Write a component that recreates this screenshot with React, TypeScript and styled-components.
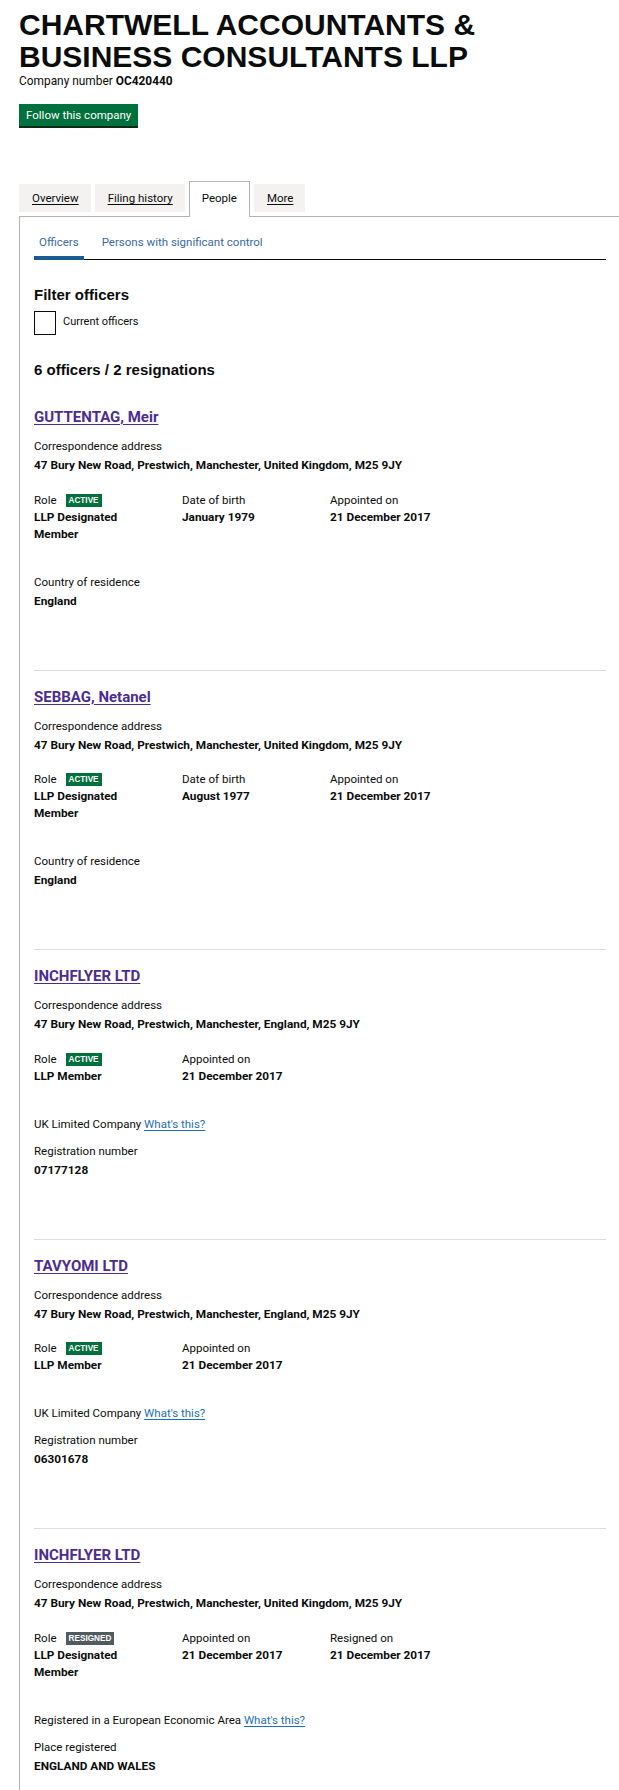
import React from "react";
import styled, { createGlobalStyle } from "styled-components";

const GlobalStyle = createGlobalStyle`
  html, body { margin: 0; padding: 0; background: #ffffff; overflow-x: hidden; }
  body {
    font-family: Roboto, "Liberation Sans", Arial, sans-serif;
    color: #0b0c0c;
    font-size: 11.5px;
    line-height: 17px;
  }
  * { box-sizing: border-box; }
`;

const Page = styled.div`
  padding: 9px 0 0 19px;
`;

const Title = styled.h1`
  margin: 0;
  font-family: "Liberation Sans", Arial, sans-serif;
  font-weight: 700;
  font-size: 30px;
  line-height: 32px;
  color: #0b0c0c;
`;

const CompanyNumber = styled.p`
  margin: 0;
  font-size: 11.9px;
  line-height: 17px;
  strong { font-weight: 700; }
`;

const FollowButton = styled.button`
  margin-top: 14px;
  height: 22px;
  padding: 0 7px;
  border: none;
  border-radius: 0;
  background: #00703c;
  color: #ffffff;
  font-family: Roboto, "Liberation Sans", Arial, sans-serif;
  font-size: 11.5px;
  line-height: 22px;
  box-shadow: 0 2px 0 #002d18;
  cursor: pointer;
  display: block;
`;

const TabNav = styled.ul`
  list-style: none;
  margin: 55px 0 0;
  padding: 0;
  display: flex;
  align-items: flex-end;
  gap: 4px;
`;

const Tab = styled.li<{ $active?: boolean }>`
  line-height: 28px;
  font-size: 11.5px;
  ${(p) =>
    p.$active
      ? `
    background: #ffffff;
    border: 1px solid #b1b4b6;
    border-bottom: none;
    padding: 2px 12px 5px;
    margin-bottom: -1px;
    position: relative;
    z-index: 1;
  `
      : `
    background: #f3f2f1;
    height: 28px;
    padding: 0 12px 0 13px;
    margin-bottom: 4px;
  `}
  a {
    color: #0b0c0c;
    text-decoration: ${(p) => (p.$active ? "none" : "underline")};
    text-underline-offset: 2px;
  }
`;

const Panel = styled.div`
  width: 602px;
  border: 1px solid #b1b4b6;
  border-bottom: none;
  padding: 17px 14px 80px;
`;

const SubTabs = styled.ul`
  list-style: none;
  margin: 0;
  padding: 0;
  display: flex;
  gap: 13px;
  border-bottom: 1px solid #0b0c0c;
`;

const SubTab = styled.li<{ $selected?: boolean }>`
  padding: 0 5px 9px;
  margin-bottom: -1px;
  line-height: 17px;
  color: #3a6aa8;
  box-shadow: ${(p) => (p.$selected ? "inset 0 -4px 0 #1d5b94" : "none")};
`;

const SectionHeading = styled.h2<{ $gap: number }>`
  margin: ${(p) => p.$gap}px 0 0;
  font-family: "Liberation Sans", Arial, sans-serif;
  font-weight: 700;
  font-size: 15px;
  line-height: 20px;
`;

const CheckRow = styled.label`
  margin-top: 6px;
  display: flex;
  align-items: center;
  gap: 7px;
`;

const CheckBox = styled.span`
  width: 22px;
  height: 24px;
  border: 1.5px solid #0b0c0c;
  background: #ffffff;
`;

const CheckText = styled.span`
  font-size: 11px;
  margin-top: -3px;
`;

const OfficerList = styled.div`
  margin-top: 27px;
`;

const Officer = styled.section``;

const OfficerName = styled.a`
  display: block;
  width: fit-content;
  font-weight: 700;
  font-size: 15px;
  line-height: 20px;
  color: #4c2c92;
  text-decoration: underline;
  text-underline-offset: 2px;
`;

const Label = styled.div<{ $gap?: number }>`
  margin-top: ${(p) => p.$gap ?? 0}px;
  line-height: 17px;
`;

const Value = styled.div`
  margin-top: 2px;
  font-weight: 700;
  font-size: 11.8px;
  line-height: 17px;
`;

const Grid = styled.div<{ $cols: number }>`
  margin-top: 17.5px;
  display: grid;
  grid-template-columns: repeat(${(p) => p.$cols}, 118px);
  column-gap: 30px;
`;

const Cell = styled.div``;

const CellValue = styled.div`
  font-weight: 700;
  font-size: 11.8px;
  line-height: 17px;
`;

const Badge = styled.span<{ $resigned?: boolean }>`
  display: inline-block;
  vertical-align: 1px;
  margin-left: 9px;
  padding: 0 3px;
  height: 13px;
  line-height: 13px;
  font-family: "Liberation Sans", Arial, sans-serif;
  font-weight: 700;
  font-size: 8.2px;
  color: #ffffff;
  background: ${(p) => (p.$resigned ? "#505a5f" : "#00703c")};
`;

const Extra = styled.div`
  margin-top: 31px;
`;

const InfoLink = styled.a`
  color: #1d70b8;
  text-decoration: underline;
  text-underline-offset: 2px;
`;

const Rule = styled.hr`
  margin: 60px 0 16px;
  border: none;
  border-top: 1px solid #dcdddf;
  height: 0;
`;

type Field = { label: string; value: string };
type OfficerData = {
  name: string;
  address: string;
  status: "ACTIVE" | "RESIGNED";
  role: string;
  columns: Field[];
  extra: { note?: string; label: string; value: string };
};

const UK = "47 Bury New Road, Prestwich, Manchester, United Kingdom, M25 9JY";
const ENG = "47 Bury New Road, Prestwich, Manchester, England, M25 9JY";

const officers: OfficerData[] = [
  {
    name: "GUTTENTAG, Meir",
    address: UK,
    status: "ACTIVE",
    role: "LLP Designated Member",
    columns: [
      { label: "Date of birth", value: "January 1979" },
      { label: "Appointed on", value: "21 December 2017" },
    ],
    extra: { label: "Country of residence", value: "England" },
  },
  {
    name: "SEBBAG, Netanel",
    address: UK,
    status: "ACTIVE",
    role: "LLP Designated Member",
    columns: [
      { label: "Date of birth", value: "August 1977" },
      { label: "Appointed on", value: "21 December 2017" },
    ],
    extra: { label: "Country of residence", value: "England" },
  },
  {
    name: "INCHFLYER LTD",
    address: ENG,
    status: "ACTIVE",
    role: "LLP Member",
    columns: [{ label: "Appointed on", value: "21 December 2017" }],
    extra: { note: "UK Limited Company", label: "Registration number", value: "07177128" },
  },
  {
    name: "TAVYOMI LTD",
    address: ENG,
    status: "ACTIVE",
    role: "LLP Member",
    columns: [{ label: "Appointed on", value: "21 December 2017" }],
    extra: { note: "UK Limited Company", label: "Registration number", value: "06301678" },
  },
  {
    name: "INCHFLYER LTD",
    address: UK,
    status: "RESIGNED",
    role: "LLP Designated Member",
    columns: [
      { label: "Appointed on", value: "21 December 2017" },
      { label: "Resigned on", value: "21 December 2017" },
    ],
    extra: {
      note: "Registered in a European Economic Area",
      label: "Place registered",
      value: "ENGLAND AND WALES",
    },
  },
];

function OfficerBlock({ o }: { o: OfficerData }) {
  return (
    <Officer>
      <OfficerName href="#">{o.name}</OfficerName>
      <Label $gap={11}>Correspondence address</Label>
      <Value>{o.address}</Value>
      <Grid $cols={o.columns.length + 1}>
        <Cell>
          <Label>
            Role
            <Badge $resigned={o.status === "RESIGNED"}>{o.status}</Badge>
          </Label>
          <CellValue>{o.role}</CellValue>
        </Cell>
        {o.columns.map((c) => (
          <Cell key={c.label}>
            <Label>{c.label}</Label>
            <CellValue>{c.value}</CellValue>
          </Cell>
        ))}
      </Grid>
      <Extra>
        {o.extra.note && (
          <Label>
            {o.extra.note} <InfoLink href="#">What's this?</InfoLink>
          </Label>
        )}
        <Label $gap={o.extra.note ? 10 : 0}>{o.extra.label}</Label>
        <Value>{o.extra.value}</Value>
      </Extra>
    </Officer>
  );
}

export default function App() {
  return (
    <>
      <GlobalStyle />
      <Page>
        <Title>
          CHARTWELL ACCOUNTANTS &amp;
          <br />
          BUSINESS CONSULTANTS LLP
        </Title>
        <CompanyNumber>
          Company number <strong>OC420440</strong>
        </CompanyNumber>
        <FollowButton>Follow this company</FollowButton>
        <TabNav>
          <Tab><a href="#">Overview</a></Tab>
          <Tab><a href="#">Filing history</a></Tab>
          <Tab $active><a href="#">People</a></Tab>
          <Tab><a href="#">More</a></Tab>
        </TabNav>
        <Panel>
          <SubTabs>
            <SubTab $selected>Officers</SubTab>
            <SubTab>Persons with significant control</SubTab>
          </SubTabs>
          <SectionHeading $gap={25}>Filter officers</SectionHeading>
          <CheckRow>
            <CheckBox />
            <CheckText>Current officers</CheckText>
          </CheckRow>
          <SectionHeading $gap={25}>6 officers / 2 resignations</SectionHeading>
          <OfficerList>
            {officers.map((o, i) => (
              <React.Fragment key={i}>
                {i > 0 && <Rule />}
                <OfficerBlock o={o} />
              </React.Fragment>
            ))}
          </OfficerList>
        </Panel>
      </Page>
    </>
  );
}
